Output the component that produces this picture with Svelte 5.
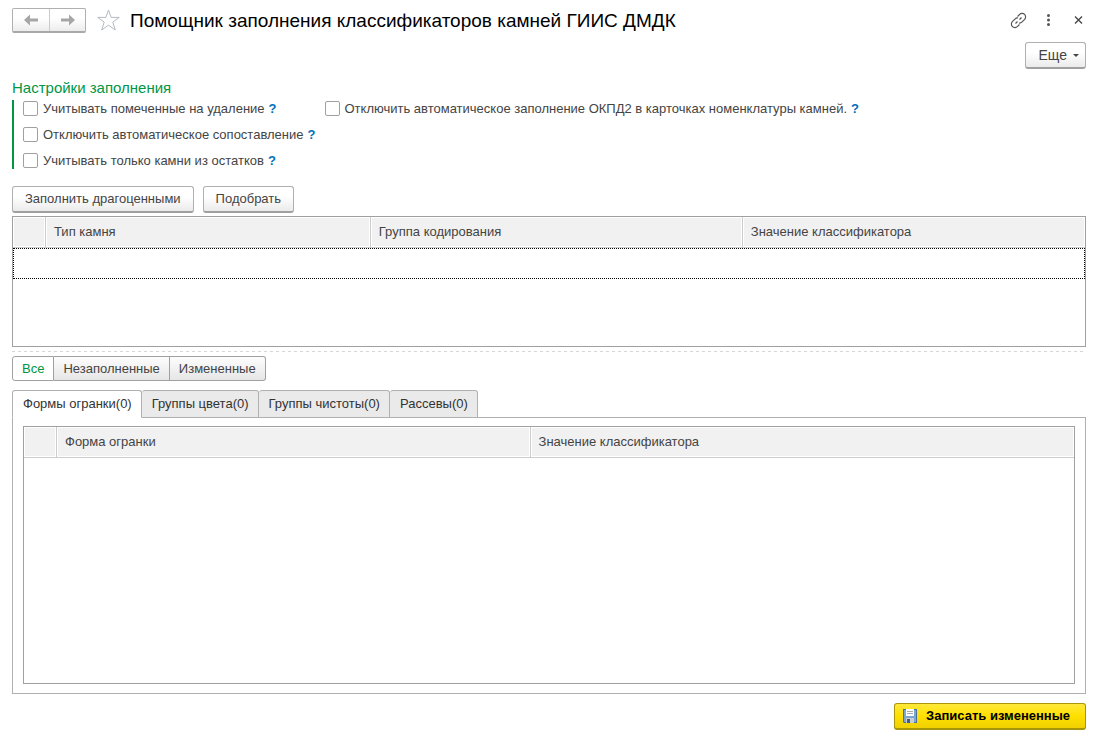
<script lang="ts">
	let deleted = $state(false);
	let noMatching = $state(false);
	let onlyStock = $state(false);
	let noOkpd = $state(false);

	let filter = $state('all');
	let activeTab = $state('shapes');

	const filters = [
		{ id: 'all', label: 'Все' },
		{ id: 'empty', label: 'Незаполненные' },
		{ id: 'changed', label: 'Измененные' }
	];

	const tabs = [
		{ id: 'shapes', label: 'Формы огранки', column: 'Форма огранки', count: 0 },
		{ id: 'colors', label: 'Группы цвета', column: 'Группа цвета', count: 0 },
		{ id: 'clarity', label: 'Группы чистоты', column: 'Группа чистоты', count: 0 },
		{ id: 'sieves', label: 'Рассевы', column: 'Рассев', count: 0 }
	];

	let current = $derived(tabs.find((tab) => tab.id === activeTab) ?? tabs[0]);
</script>

{#snippet option(label: string, checked: boolean, toggle: () => void)}
	<div class="option">
		<label>
			<input type="checkbox" {checked} onchange={toggle} />
			<span>{label}</span>
		</label>
		<button class="help" aria-label="Справка: {label}">?</button>
	</div>
{/snippet}

<div class="form">
	<header>
		<div class="history">
			<button aria-label="Назад">
				<svg width="14" height="12" viewBox="0 0 14 12">
					<path d="M0 6 6 .5v4h8v3H6v4z" fill="#a6a6a6" />
				</svg>
			</button>
			<button aria-label="Вперед">
				<svg width="14" height="12" viewBox="0 0 14 12">
					<path d="M14 6 8 .5v4H0v3h8v4z" fill="#a6a6a6" />
				</svg>
			</button>
		</div>
		<button class="icon star" aria-label="В избранное">
			<svg width="24" height="24" viewBox="0 0 24 24" fill="none" stroke="#b4bac2">
				<path d="M11.5 1l2.600 7.400h8.200l-6.500 4.700 2.500 7.900-6.800-4.800-6.800 4.800 2.500-7.900L.7 8.400h8.200z" />
			</svg>
		</button>
		<h1>Помощник заполнения классификаторов камней ГИИС ДМДК</h1>
		<div class="window-actions">
			<button class="icon" aria-label="Получить ссылку">
				<svg
					width="18"
					height="18"
					viewBox="0 0 18 18"
					fill="none"
					stroke="#555"
					stroke-width="1.2"
				>
					<path d="M7.500 4.500l2.200-2.200c1-1 3.400-1.400 4.900.1s1.100 3.900.1 4.900l-2.900 2.900c-.8.8-1.800 1-2.800.8" />
					<path d="M9.500 12.500l-2.200 2.200c-1 1-3.400 1.400-4.900-.1s-1.100-3.900-.1-4.900l2.900-2.900c.8-.8 1.800-1 2.800-.8" />
					<path d="M5.500 11.500l2-2M9.500 7.500l2-2" />
				</svg>
			</button>
			<button class="icon" aria-label="Дополнительно">
				<svg width="18" height="18" viewBox="0 0 18 18" fill="#555">
					<circle cx="8.5" cy="3.5" r="1.5" />
					<circle cx="8.5" cy="8" r="1.5" />
					<circle cx="8.5" cy="12.5" r="1.5" />
				</svg>
			</button>
			<button class="icon" aria-label="Закрыть">
				<svg width="18" height="18" viewBox="0 0 18 18" stroke="#444" stroke-width="1.3">
					<path d="M5 4.500l7 7M12 4.500l-7 7" />
				</svg>
			</button>
		</div>
	</header>

	<div class="command-bar">
		<button class="button more">
			Еще
			<svg width="6" height="3" viewBox="0 0 6 3"><path d="M0 0h6L3 3z" fill="#444" /></svg>
		</button>
	</div>

	<section class="settings">
		<h2>Настройки заполнения</h2>
		<div class="options">
			<div class="options-column">
				{@render option('Учитывать помеченные на удаление', deleted, () => (deleted = !deleted))}
				{@render option('Отключить автоматическое сопоставление', noMatching, () => (noMatching = !noMatching))}
				{@render option('Учитывать только камни из остатков', onlyStock, () => (onlyStock = !onlyStock))}
			</div>
			<div class="options-column">
				{@render option(
					'Отключить автоматическое заполнение ОКПД2 в карточках номенклатуры камней.',
					noOkpd,
					() => (noOkpd = !noOkpd)
				)}
			</div>
		</div>
	</section>

	<div class="fill-buttons">
		<button class="button">Заполнить драгоценными</button>
		<button class="button">Подобрать</button>
	</div>

	<div class="grid stones">
		<table>
			<thead>
				<tr>
					<th class="mark" aria-label="Состояние"></th>
					<th class="stone-type">Тип камня</th>
					<th class="coding-group">Группа кодирования</th>
					<th>Значение классификатора</th>
				</tr>
			</thead>
			<tbody>
				<tr class="focused">
					<td colspan="4"></td>
				</tr>
			</tbody>
		</table>
	</div>

	<div class="splitter"></div>

	<div class="filters">
		{#each filters as item (item.id)}
			<button
				class:active={filter === item.id}
				aria-pressed={filter === item.id}
				onclick={() => (filter = item.id)}>{item.label}</button
			>
		{/each}
	</div>

	<div class="tabs" role="tablist">
		{#each tabs as tab (tab.id)}
			<button
				role="tab"
				class:active={activeTab === tab.id}
				aria-selected={activeTab === tab.id}
				onclick={() => (activeTab = tab.id)}>{tab.label}({tab.count})</button
			>
		{/each}
	</div>

	<div class="tab-panel" role="tabpanel">
		<div class="grid values">
			<table>
				<thead>
					<tr>
						<th class="mark" aria-label="Состояние"></th>
						<th class="property">{current.column}</th>
						<th>Значение классификатора</th>
					</tr>
				</thead>
			</table>
		</div>
	</div>

	<footer>
		<button class="button primary">
			<svg width="14" height="14" viewBox="0 0 14 14">
				<path d="M0 0h14v14H1l-1-1z" fill="#4a7096" />
				<path d="M1 1h12v12H1z" fill="#7ba7d0" />
				<path d="M3 0h8v7H3z" fill="#fff" />
				<path d="M4 2h6v1H4zM4 4h6v1H4z" fill="#a9a9a9" />
				<path d="M3 9h8v5H3z" fill="#c9cdd0" />
				<path d="M4 10h3v4H4z" fill="#3f5f80" />
			</svg>
			Записать измененные
		</button>
	</footer>
</div>

<style>
	:global(body) {
		margin: 0;
		background: #fff;
	}

	.form {
		display: flex;
		flex-direction: column;
		box-sizing: border-box;
		min-height: 100vh;
		padding: 8px 18px 12px 12px;
		font-family: 'Liberation Sans', Arial, sans-serif;
		font-size: 13px;
		line-height: 16px;
		color: #444;
	}

	button {
		box-sizing: border-box;
		margin: 0;
		font: inherit;
		color: inherit;
		white-space: nowrap;
		cursor: pointer;
	}

	svg {
		display: block;
		flex: none;
	}

	h1,
	h2 {
		margin: 0;
		font-weight: 400;
	}

	/* Title bar */
	header {
		display: flex;
		align-items: center;
	}

	.history {
		display: flex;
		box-sizing: border-box;
		height: 25px;
		border: 1px solid #b0b0b0;
		border-bottom: 2px solid #a8a8a8;
		border-radius: 2px;
		background: linear-gradient(#fff 40%, #ececec);
	}

	.history button {
		display: flex;
		align-items: center;
		justify-content: center;
		width: 36px;
		padding: 0;
		border: 0;
		background: none;
	}

	.history button + button {
		border-left: 1px solid #ccc;
	}

	.icon {
		padding: 0;
		border: 0;
		background: none;
	}

	.star {
		margin: 0 9px 0 11px;
	}

	h1 {
		flex: 1;
		font-size: 19px;
		line-height: 24px;
		color: #000;
	}

	.window-actions {
		display: flex;
		gap: 12px;
		margin-right: -2px;
	}

	.command-bar {
		display: flex;
		justify-content: flex-end;
		margin-top: 9px;
	}

	.button {
		height: 27px;
		padding: 0 12px;
		border: 1px solid #b0b0b0;
		border-bottom: 2px solid #a0a0a0;
		border-radius: 3px;
		background: linear-gradient(#fff 40%, #ebebeb);
	}

	.more {
		display: flex;
		align-items: center;
		gap: 6px;
		padding: 0 6px 0 13px;
		font-size: 14px;
	}

	/* Settings */
	.settings {
		margin-top: 9px;
	}

	h2 {
		font-size: 15px;
		line-height: 20px;
		color: #009646;
	}

	.options {
		display: flex;
		gap: 9px;
		margin-top: 2px;
		padding-left: 9px;
		border-left: 2px solid #009646;
	}

	.options-column {
		display: flex;
		flex-direction: column;
		gap: 9px;
	}

	.option {
		display: flex;
		align-items: center;
		height: 17px;
	}

	.option label {
		display: flex;
		align-items: center;
		gap: 5px;
	}

	.option input {
		appearance: none;
		box-sizing: border-box;
		width: 15px;
		height: 15px;
		margin: 0;
		border: 1px solid #a0a0a0;
		border-radius: 2px;
		background: #fff;
	}

	.option input:checked {
		background: #009646;
		box-shadow: inset 0 0 0 2px #fff;
	}

	.help {
		width: 8px;
		margin-left: 4px;
		padding: 0;
		border: 0;
		background: none;
		font-weight: 700;
		color: #0070ba;
	}

	.fill-buttons {
		display: flex;
		gap: 9px;
		margin-top: 17px;
	}

	/* Grids */
	.grid {
		box-sizing: border-box;
		border: 1px solid #a0a0a0;
		background: #fff;
	}

	.stones {
		min-height: 131px;
		margin-top: 3px;
	}

	table {
		width: 100%;
		table-layout: fixed;
		border-collapse: separate;
		border-spacing: 0;
	}

	th {
		box-sizing: border-box;
		height: 31px;
		padding: 0 8px;
		border-right: 1px solid #ccc;
		border-bottom: 1px solid #ccc;
		background: #f1f1f1;
		box-shadow: inset 0 0 0 1px #fff;
		font-weight: 400;
		text-align: left;
	}

	th:last-child {
		border-right: 0;
	}

	.mark {
		width: 33px;
	}

	.stone-type {
		width: 30.3%;
	}

	.coding-group {
		width: 34.7%;
	}

	.property {
		width: 45.1%;
	}

	.focused td {
		box-sizing: border-box;
		height: 31px;
		padding: 0;
		border: 1px dotted #000;
	}

	.splitter {
		height: 1px;
		margin: 4px 0;
		background: repeating-linear-gradient(90deg, #d6d6d6 0 3px, transparent 3px 6px);
	}

	/* Row filter */
	.filters {
		display: flex;
	}

	.filters button {
		height: 25px;
		padding: 0 9px;
		border: 1px solid #a0a0a0;
		border-left-width: 0;
		background: linear-gradient(#fdfdfd, #e6e6e6);
	}

	.filters button:first-child {
		border-left-width: 1px;
		border-radius: 3px 0 0 3px;
	}

	.filters button:last-child {
		border-radius: 0 3px 3px 0;
	}

	.filters .active {
		background: #fff;
		color: #009646;
	}

	/* Tabs */
	.tabs {
		display: flex;
		z-index: 1;
		margin-top: 9px;
	}

	.tabs button {
		height: 28px;
		padding: 0 9px 0 10px;
		border: 1px solid #b0b0b0;
		border-left-width: 0;
		border-radius: 3px 3px 0 0;
		background: #eaeaea;
		color: #333;
	}

	.tabs button:first-child {
		border-left-width: 1px;
	}

	.tabs .active {
		border-bottom-color: #fff;
		background: #fff;
	}

	.tab-panel {
		display: flex;
		flex: 1;
		margin-top: -1px;
		padding: 8px 10px 9px;
		border: 1px solid #b0b0b0;
	}

	.values {
		flex: 1;
		min-height: 120px;
	}

	footer {
		display: flex;
		justify-content: flex-end;
		margin-top: 9px;
	}

	.primary {
		display: flex;
		align-items: center;
		gap: 9px;
		padding: 0 15px 0 8px;
		border-color: #a8960a;
		background: linear-gradient(#ffe83a, #ffe000 50%, #f0d000);
		font-weight: 700;
		color: #000;
	}
</style>
